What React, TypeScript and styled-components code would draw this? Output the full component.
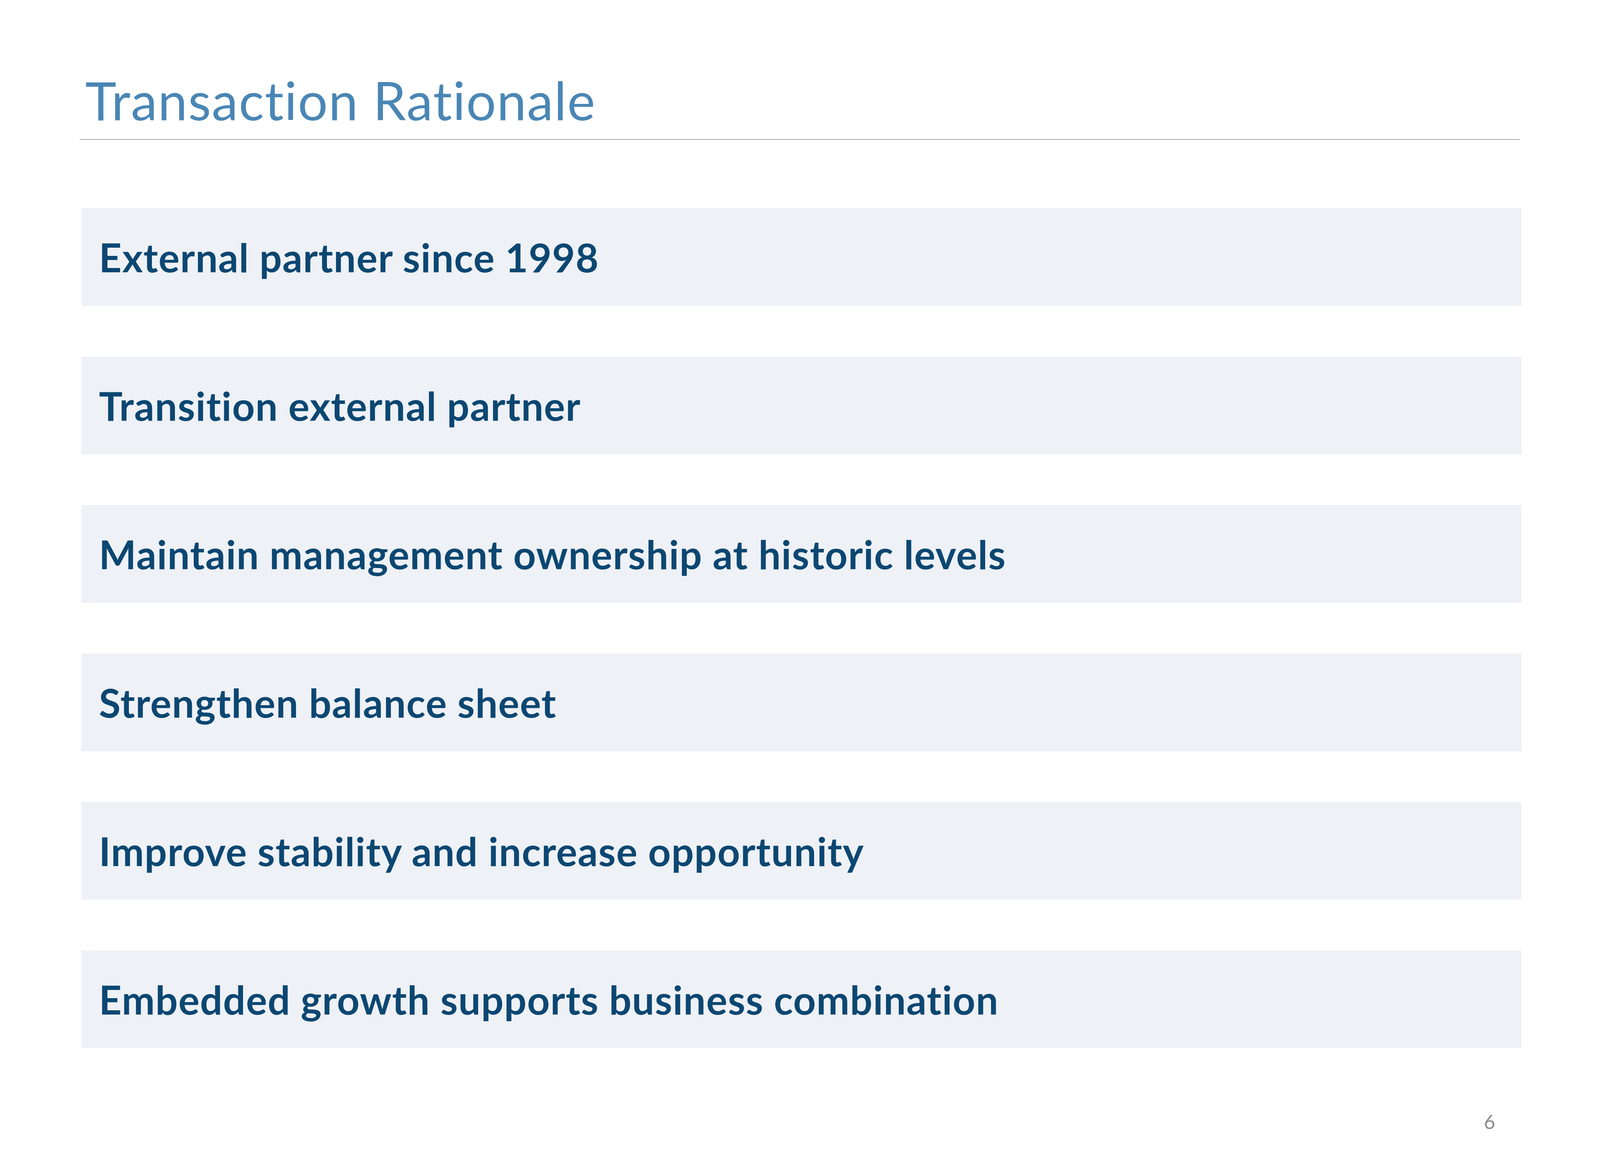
import React from 'react';
import styled, { createGlobalStyle } from 'styled-components';

// ==============================================================================
// Data
// ==============================================================================

const rationaleItems: string[] = [
  'External partner since 1998',
  'Transition external partner',
  'Maintain management ownership at historic levels',
  'Strengthen balance sheet',
  'Improve stability and increase opportunity',
  'Embedded growth supports business combination',
];

// ==============================================================================
// Styled Components
// ==============================================================================

const GlobalStyle = createGlobalStyle`
  html, body {
    margin: 0;
    padding: 0;
    background: #ffffff;
  }
  body {
    font-family: Lato, 'Open Sans', 'Liberation Sans', sans-serif;
  }
`;

// Slide canvas: horizontal margins in % so it keeps the slide proportions
const Slide = styled.main`
  width: 100%;
  height: 100vh;
  min-height: 3000px;
  box-sizing: border-box;
  padding: 0 5% 0 4.97%;
  display: flex;
  flex-direction: column;
  background: #ffffff;
`;

const Header = styled.header`
  height: 358px;
  display: flex;
  align-items: flex-end;
  border-bottom: 2px solid #a6a6a6;
  box-sizing: border-box;
  padding: 0 0 32px 0.4%;
`;

const Title = styled.h1`
  margin: 0;
  font-family: Lato, 'Open Sans', sans-serif;
  font-weight: 400;
  font-size: 135px;
  letter-spacing: 2px;
  line-height: 1;
  color: #4a86b5;
`;

const ItemList = styled.ul`
  list-style: none;
  margin: 175px -0.11% 0 0.13%;
  padding: 0;
  display: flex;
  flex-direction: column;
  gap: 130px;
`;

const ItemBar = styled.li`
  height: 250px;
  background: #eef1f6;
  display: flex;
  align-items: center;
  padding-left: 1.22%;
  box-sizing: border-box;
`;

const ItemText = styled.span`
  font-family: Lato, 'Open Sans', sans-serif;
  font-weight: 700;
  font-size: 101px;
  letter-spacing: 1.5px;
  line-height: 1;
  color: #0c4772;
`;

const Footer = styled.footer`
  margin-top: auto;
  display: flex;
  justify-content: flex-end;
  padding: 0 1.72% 104px 0;
`;

const PageNumber = styled.span`
  font-family: Lato, 'Open Sans', sans-serif;
  font-size: 50px;
  line-height: 1;
  color: #8c8c8c;
`;

// ==============================================================================
// Main Component
// ==============================================================================

const App: React.FC = () => {
  return (
    <>
      <GlobalStyle />
      <Slide>
        <Header>
          <Title>Transaction Rationale</Title>
        </Header>
        <ItemList>
          {rationaleItems.map((item) => (
            <ItemBar key={item}>
              <ItemText>{item}</ItemText>
            </ItemBar>
          ))}
        </ItemList>
        <Footer>
          <PageNumber>6</PageNumber>
        </Footer>
      </Slide>
    </>
  );
};

export default App;
